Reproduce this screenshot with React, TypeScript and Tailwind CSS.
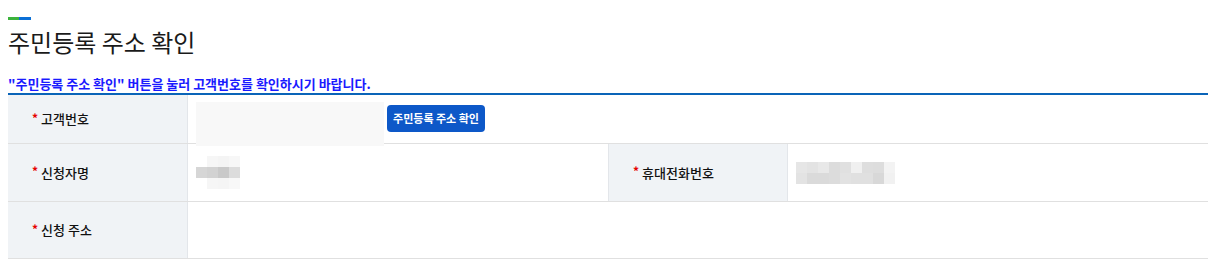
const FONT = { fontFamily: '"Noto Sans CJK KR", "Noto Sans", sans-serif' };

function Pixels({ rows, cell }: { rows: string[][]; cell: number }) {
  return (
    <div className="flex flex-col">
      {rows.map((r, i) => (
        <div key={i} className="flex">
          {r.map((c, j) => (
            <div key={j} style={{ width: cell, height: cell, background: c }} />
          ))}
        </div>
      ))}
    </div>
  );
}

function Label({ text, className = '' }: { text: string; className?: string }) {
  return (
    <div className={`flex w-[180px] shrink-0 items-center border-r border-[#e3e6ea] bg-[#f0f3f6] pl-[24px] text-[13px] font-medium text-[#111] ${className}`}>
      <span className="mr-[3px] -mt-[3px] text-[12px] font-bold text-[#e60000]">*</span>
      {text}
    </div>
  );
}

export default function App() {
  const nameBlur = [
    ['#ffffff', '#f6f6f6', '#f4f4f4', '#f7f7f7'],
    ['#d6d6d6', '#d2d2d2', '#c9c9c9', '#dcdcdc'],
    ['#ffffff', '#f6f6f6', '#f5f5f5', '#f8f8f8'],
  ];
  const phoneBlur = [
    ['#e6e6e6', '#e3e3e3', '#e8e8e8', '#dcdcdc', '#e0e0e0', '#f0f0f0', '#dedede', '#dddddd', '#f3f3f3'],
    ['#e3e3e3', '#dadada', '#dadada', '#dcdcdc', '#e2e2e2', '#e0e0e0', '#e0e0e0', '#d8d8d8', '#f1f1f1'],
  ];

  return (
    <div className="w-[1215px] bg-white px-2 pt-[17px]" style={FONT}>
      <div className="flex h-[3px]">
        <div className="w-[11px] bg-[#3cb33c]" />
        <div className="w-[12px] bg-[#0a6fd6]" />
      </div>
      <h1 className="mt-[5px] text-[24px] leading-[34px] text-[#1a1a1a]">주민등록 주소 확인</h1>
      <p className="mt-[16px] text-[13px] font-bold leading-[18px] text-[#1a1aff]">
        "주민등록 주소 확인" 버튼을 눌러 고객번호를 확인하시기 바랍니다.
      </p>
      <div className="w-[1200px] border-t-2 border-[#0a64b8]">
        <div className="flex h-[49px] border-b border-[#e0e0e0]">
          <Label text="고객번호" />
          <div className="flex items-start pl-[8px] pt-[7px]">
            <div className="h-[44px] w-[188px] bg-[#f8f8f8]" />
            <button className="mt-[3px] ml-[3px] h-[27px] w-[98px] rounded-[4px] bg-[#0d58c8] text-[11px] font-bold text-white">
              주민등록 주소 확인
            </button>
          </div>
        </div>
        <div className="flex h-[58px] border-b border-[#e0e0e0]">
          <Label text="신청자명" />
          <div className="flex w-[420px] items-center pl-[8px]">
            <Pixels rows={nameBlur} cell={11} />
          </div>
          <Label text="휴대전화번호" className="border-l" />
          <div className="flex flex-1 items-center pl-[8px]">
            <Pixels rows={phoneBlur} cell={11} />
          </div>
        </div>
        <div className="flex h-[57px] border-b border-[#e0e0e0]">
          <Label text="신청 주소" />
          <div className="flex-1" />
        </div>
      </div>
    </div>
  );
}
